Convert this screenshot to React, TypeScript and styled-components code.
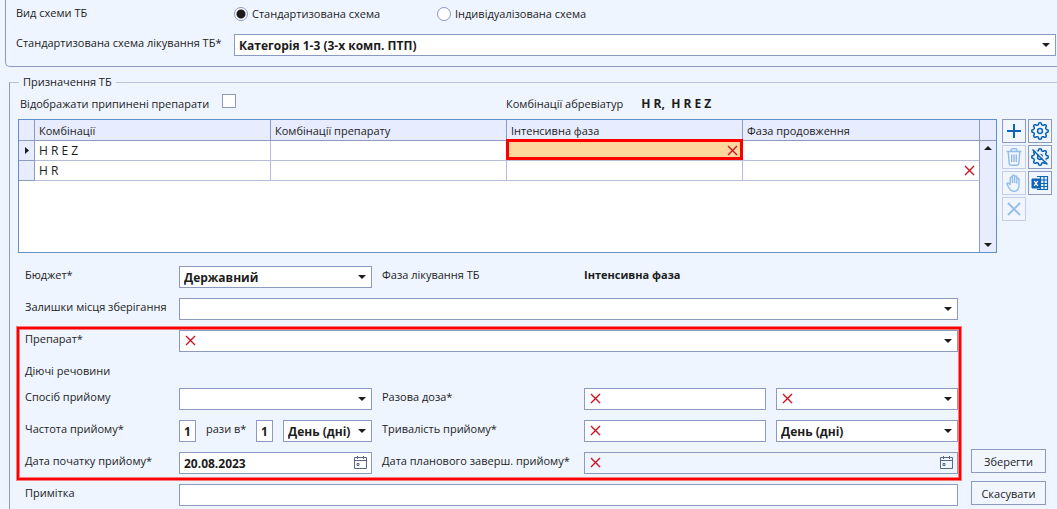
import React, { useState } from "react";
import styled, { createGlobalStyle, css } from "styled-components";

const color = {
  page: "#eef5ff",
  border: "#8c99c0",
  faint: "#b9c3dc",
  grid: "#5f92cc",
  head: "#e7edfe",
  line: "#b9bcd9",
  text: "#1c1c1c",
  blue: "#0a64bc",
  alert: "#ff0000",
  error: "#cf1020",
};

const size = {
  label: "11px",
  value: "12px",
};

const GlobalStyle = createGlobalStyle`
  *, *::before, *::after { box-sizing: border-box; }
  html { height: 100%; background: ${color.page}; overflow: hidden; }
  body { margin: 0; color: ${color.text}; }
  body, button, input, select, table {
    font-family: "Open Sans", "Noto Sans", sans-serif;
    font-size: ${size.label};
    line-height: 18px;
  }
`;

const SchemePanel = styled.section`
  display: flex;
  flex-direction: column;
  gap: 10px;
  margin-left: 5px;
  padding: 4px 1px 10px 10px;
  border: 1px solid ${color.border};
  border-width: 0 0 1px 1px;
  border-bottom-left-radius: 5px;
`;

const SchemeRow = styled.div<{ $tall?: boolean }>`
  display: grid;
  grid-template-columns: 218px minmax(0, 1fr);
  height: ${(p) => (p.$tall ? 22 : 20)}px;
`;

const RadioGroup = styled.div`
  display: flex;
  align-items: center;
  gap: 20px;
`;

const RadioLabel = styled.label`
  display: flex;
  align-items: center;
  gap: 4px;
  width: 183px;
  white-space: nowrap;
`;

const Radio = styled.input`
  appearance: none;
  flex: none;
  width: 14px;
  height: 14px;
  margin: 0;
  border: 1px solid ${color.border};
  border-radius: 50%;
  background: #fff;
  &:checked {
    background: radial-gradient(circle, #1c1c1c 4px, #fff 5px);
  }
`;

const Prescription = styled.fieldset`
  margin: 7px 0 0 9px;
  min-width: 0;
  padding: 0 5px 3px 8px;
  border: 1px solid ${color.border};
  border-top-color: ${color.faint};
  border-width: 1px 0 0 1px;
`;

const Legend = styled.legend`
  margin-left: 1px;
  padding: 0 4px;
  line-height: 16px;
`;

const FilterBar = styled.div`
  display: grid;
  grid-template-columns: 488px minmax(0, 1fr);
  align-items: center;
  height: 29px;
  padding-bottom: 2px;
`;

const CheckLabel = styled.label`
  display: flex;
  align-items: flex-start;
  gap: 13px;
  height: 20px;
  padding-left: 2px;
  line-height: 20px;
`;

const Checkbox = styled.input`
  appearance: none;
  width: 14px;
  height: 14px;
  margin: 0;
  border: 1px solid ${color.border};
  background: #fff;
  &:checked {
    background: ${color.blue};
  }
`;

const Abbreviations = styled.div`
  display: flex;
  gap: 18px;
`;

const Strong = styled.strong<{ $value?: boolean }>`
  font-size: ${(p) => (p.$value ? size.value : size.label)};
  font-weight: 700;
  white-space: pre;
`;

const GridArea = styled.div`
  display: flex;
  gap: 5px;
`;

const DataGrid = styled.div`
  display: flex;
  flex: 1;
  min-width: 0;
  height: 134px;
  border: 1px solid ${color.grid};
  background: #fff;
`;

const TableBox = styled.div`
  flex: 1;
  min-width: 0;
`;

const Table = styled.table`
  width: 100%;
  table-layout: fixed;
  border-collapse: separate;
  border-spacing: 0;
`;

const MarkerCol = styled.col`
  width: 16px;
`;

const HeadCell = styled.th`
  height: 21px;
  padding: 1px 4px 0;
  text-align: left;
  font-weight: 400;
  background: ${color.head};
  border-right: 1px solid ${color.border};
  border-bottom: 1px solid ${color.border};
  &:last-child {
    border-right: 0;
  }
`;

const MarkerCell = styled.td`
  height: 20px;
  padding: 0;
  background: ${color.head};
  border-right: 1px solid ${color.border};
  border-bottom: 1px solid ${color.border};
`;

const Cell = styled.td<{ $active?: boolean }>`
  position: relative;
  height: 20px;
  padding: 0 4px;
  font-size: ${size.value};
  border-right: 1px solid ${color.line};
  border-bottom: 1px solid ${color.line};
  &:last-child {
    border-right: 0;
  }
  ${(p) =>
    p.$active &&
    css`
      background: #fdd79c;
      &::after {
        content: "";
        position: absolute;
        inset: -2px -1px 0 -1px;
        border: 3px solid ${color.alert};
        pointer-events: none;
      }
    `}
`;

const CellMark = styled.span`
  display: flex;
  justify-content: flex-end;
`;

const ScrollBar = styled.div`
  display: flex;
  flex-direction: column;
  align-items: center;
  justify-content: space-between;
  width: 17px;
  padding-bottom: 5px;
  background: ${color.head};
  border-left: 1px solid ${color.border};
`;

const ScrollHead = styled.div`
  align-self: stretch;
  height: 21px;
  border-bottom: 1px solid ${color.border};
`;

const ScrollTrack = styled.div`
  display: flex;
  flex: 1;
  flex-direction: column;
  justify-content: space-between;
  padding-top: 5px;
`;

const ToolGrid = styled.div`
  display: grid;
  grid-template-columns: 24px 24px;
  grid-auto-rows: 24px;
  gap: 2px;
`;

const ToolButton = styled.button`
  display: flex;
  align-items: center;
  justify-content: center;
  padding: 0;
  color: ${color.blue};
  background: #f1f5fe;
  border: 1px solid ${color.border};
  &:disabled {
    color: #93bde8;
    border-color: #c4cde6;
  }
`;

const FormArea = styled.div`
  display: flex;
  gap: 13px;
  padding: 13px 6px 0 7px;
`;

const Form = styled.div`
  display: flex;
  flex: 1;
  flex-direction: column;
  gap: 10px;
  min-width: 0;
`;

const Highlight = styled.div`
  position: relative;
  display: flex;
  flex-direction: column;
  gap: 10px;
  &::after {
    content: "";
    position: absolute;
    inset: -3px -3px -6px -8px;
    border: 2px solid ${color.alert};
    box-shadow: 0 0 0 1px rgba(255, 0, 0, 0.5), inset 0 0 0 1px rgba(255, 0, 0, 0.5);
    pointer-events: none;
  }
`;

const FormRow = styled.div<{ $short?: boolean }>`
  display: grid;
  grid-template-columns: 154px minmax(0, 193fr) 212px minmax(0, 182fr) 10px minmax(0, 182fr);
  height: ${(p) => (p.$short ? 16 : 22)}px;
`;

const Label = styled.label<{ $inset?: boolean }>`
  padding-left: ${(p) => (p.$inset ? 10 : 0)}px;
  white-space: nowrap;
`;

const Field = styled.div<{ $span?: "all" | "right" | "last" }>`
  position: relative;
  display: flex;
  min-width: 0;
  height: 22px;
  ${(p) => p.$span === "all" && "grid-column: 2 / 7;"}
  ${(p) => p.$span === "right" && "grid-column: 4 / 7;"}
  ${(p) => p.$span === "last" && "grid-column: 6;"}
`;

const control = css`
  width: 100%;
  height: 22px;
  margin: 0;
  padding: 1px 4px 0;
  color: ${color.text};
  font-size: ${size.value};
  font-weight: 700;
  background: #fff;
  border: 1px solid ${color.border};
  border-radius: 0;
  outline: none;
`;

const SelectBox = styled.select`
  ${control}
  appearance: none;
`;

const TextBox = styled.input`
  ${control}
  &:read-only {
    background: ${color.page};
  }
`;

const FieldArrow = styled.span`
  position: absolute;
  top: 9px;
  right: 6px;
  display: flex;
  pointer-events: none;
`;

const FieldError = styled.span`
  position: absolute;
  top: 5px;
  left: 6px;
  display: flex;
  pointer-events: none;
`;

const DateButton = styled.button`
  position: absolute;
  top: 4px;
  right: 4px;
  display: flex;
  padding: 0;
  color: #5a6780;
  background: none;
  border: 0;
`;

const CountBox = styled(TextBox)`
  padding: 1px 0 0;
  text-align: center;
`;

const FrequencyRow = styled.div`
  display: grid;
  grid-template-columns: 17px 40px 17px minmax(0, 1fr);
  column-gap: 10px;
`;

const Actions = styled.div`
  display: flex;
  flex-direction: column;
  justify-content: flex-end;
  gap: 8px;
  width: 75px;
  padding-bottom: 1px;
`;

const ActionButton = styled.button`
  height: 24px;
  padding: 1px 0 0;
  color: ${color.text};
  background: #f1f5fe;
  border: 1px solid ${color.border};
`;

const ArrowIcon = ({ up }: { up?: boolean }) => (
  <svg width="8" height="4" viewBox="0 0 8 4" aria-hidden="true">
    <path d={up ? "M0 4 4 0l4 4z" : "M0 0h8L4 4z"} fill="#1c1c1c" />
  </svg>
);

const ErrorIcon = () => (
  <svg width="11" height="11" viewBox="0 0 11 11" aria-hidden="true">
    <path d="M1 1l9 9M10 1l-9 9" stroke={color.error} strokeWidth="1.4" fill="none" />
  </svg>
);

const MarkerIcon = () => (
  <svg width="15" height="9" viewBox="0 0 15 9" aria-hidden="true">
    <path d="M6 1l4 3.5-4 3.5z" fill="#1c1c1c" />
  </svg>
);

const CalendarIcon = () => (
  <svg width="14" height="14" viewBox="0 0 14 14" fill="none" stroke="currentColor" aria-hidden="true">
    <path d="M0.5 1.5h12v11h-12zM0.5 4.5h12M3.5 0v3M9.5 0v3" />
    <path d="M3 7.500h2v2h-2z" />
  </svg>
);

// Outline of a wheel with eight rounded teeth.
const gearPath = (() => {
  const points: string[] = [];
  for (let i = 0; i < 144; i += 1) {
    const angle = (i / 144) * Math.PI * 2;
    const wave = Math.cos(angle * 8);
    const r = 7.3 + 1 * Math.sign(wave) * Math.sqrt(Math.abs(wave));
    points.push(`${(9 + r * Math.cos(angle)).toFixed(2)} ${(9 + r * Math.sin(angle)).toFixed(2)}`);
  }
  return `M${points.join("L")}Z`;
})();

const GearIcon = ({ off }: { off?: boolean }) => (
  <svg width="18" height="18" viewBox="0 0 18 18" fill="none" stroke="currentColor" strokeWidth="1.5" strokeLinejoin="round" aria-hidden="true">
    <path d={gearPath} />
    <circle cx="9" cy="9" r="2.4" />
    {off && (
      <>
        <path d="M3 1l14 14" stroke="#f1f5fe" strokeWidth="1.6" />
        <path d="M1.5 1.5l15 15" />
      </>
    )}
  </svg>
);

const PlusIcon = () => (
  <svg width="14" height="14" viewBox="0 0 14 14" stroke="currentColor" strokeWidth="2" aria-hidden="true">
    <path d="M7 0v14M0 7h14" />
  </svg>
);

const TrashIcon = () => (
  <svg width="16" height="18" viewBox="0 0 16 18" fill="none" stroke="currentColor" strokeWidth="1.4" aria-hidden="true">
    <path d="M0.5 3.5h15M5 3.5v-1a1.7 1.7 0 0 1 1.7-1.7h2.6A1.7 1.7 0 0 1 11 2.5v1" />
    <path d="M2.2 3.5l1 12a1.8 1.8 0 0 0 1.8 1.7h6a1.8 1.8 0 0 0 1.8-1.7l1-12M5.7 6.5v7.5M8 6.5v7.5M10.3 6.5v7.5" />
  </svg>
);

const HandIcon = () => (
  <svg width="16" height="18" viewBox="0 0 16 18" fill="none" stroke="currentColor" strokeWidth="1.4" strokeLinejoin="round" strokeLinecap="round" aria-hidden="true">
    <path d="M4.2 10.5V4a1.1 1.1 0 0 1 2.2 0v4.5V2a1.1 1.1 0 0 1 2.2 0v6.5V3a1.1 1.1 0 0 1 2.2 0v6V5.2a1.1 1.1 0 0 1 2.2 0V11c0 4-2 6.3-5.2 6.3-2.4 0-3.7-1.2-4.8-3.3L1 10.2c-.4-1 .9-1.7 1.7-.8z" />
  </svg>
);

const CrossIcon = () => (
  <svg width="14" height="14" viewBox="0 0 14 14" stroke="currentColor" strokeWidth="1.8" aria-hidden="true">
    <path d="M1 1l12 12M13 1L1 13" />
  </svg>
);

const SheetIcon = () => (
  <svg width="18" height="16" viewBox="0 0 18 16" fill="none" stroke="currentColor" aria-hidden="true">
    <path d="M6 1.5h10.5v13H6M8 5h8.5M8 8.5h8.5M8 11.5h8.5M9.5 1.5v13M13 1.5v13" strokeWidth="1.2" />
    <path d="M1 4h8v9H1z" fill="currentColor" />
    <path d="M3.2 5.8l3.6 5M6.8 5.8l-3.6 5" stroke="#fff" strokeWidth="1.3" />
  </svg>
);

type SelectProps = {
  id: string;
  options?: string[];
  span?: "all" | "right" | "last";
  invalid?: boolean;
  label?: string;
};

const Select = ({ id, options = [""], span, invalid, label }: SelectProps) => (
  <Field $span={span}>
    <SelectBox id={id} aria-label={label} aria-invalid={invalid}>
      {options.map((option) => (
        <option key={option}>{option}</option>
      ))}
    </SelectBox>
    {invalid && (
      <FieldError>
        <ErrorIcon />
      </FieldError>
    )}
    <FieldArrow>
      <ArrowIcon />
    </FieldArrow>
  </Field>
);

type InputProps = {
  id: string;
  value?: string;
  span?: "all" | "right" | "last";
  invalid?: boolean;
  date?: boolean;
  readOnly?: boolean;
};

const Input = ({ id, value = "", span, invalid, date, readOnly }: InputProps) => (
  <Field $span={span}>
    <TextBox id={id} defaultValue={value} aria-invalid={invalid} readOnly={readOnly} />
    {invalid && (
      <FieldError>
        <ErrorIcon />
      </FieldError>
    )}
    {date && (
      <DateButton type="button" aria-label="Календар">
        <CalendarIcon />
      </DateButton>
    )}
  </Field>
);

const tools = [
  { label: "Додати", icon: <PlusIcon /> },
  { label: "Налаштування", icon: <GearIcon /> },
  { label: "Видалити", icon: <TrashIcon />, disabled: true },
  { label: "Скинути налаштування", icon: <GearIcon off /> },
  { label: "Припинити", icon: <HandIcon />, disabled: true },
  { label: "Експорт", icon: <SheetIcon /> },
  { label: "Відмінити", icon: <CrossIcon />, disabled: true },
];

export default function App() {
  const [scheme, setScheme] = useState("standard");

  return (
    <>
      <GlobalStyle />
      <SchemePanel>
        <SchemeRow>
          <span>Вид схеми ТБ</span>
          <RadioGroup>
            <RadioLabel>
              <Radio type="radio" name="scheme" checked={scheme === "standard"} onChange={() => setScheme("standard")} />
              Стандартизована схема
            </RadioLabel>
            <RadioLabel>
              <Radio type="radio" name="scheme" checked={scheme === "individual"} onChange={() => setScheme("individual")} />
              Індивідуалізована схема
            </RadioLabel>
          </RadioGroup>
        </SchemeRow>
        <SchemeRow $tall>
          <Label htmlFor="category">Стандартизована схема лікування ТБ*</Label>
          <Select id="category" options={["Категорія 1-3 (3-х комп. ПТП)"]} />
        </SchemeRow>
      </SchemePanel>

      <Prescription>
        <Legend>Призначення ТБ</Legend>
        <FilterBar>
          <CheckLabel>
            Відображати припинені препарати
            <Checkbox type="checkbox" />
          </CheckLabel>
          <Abbreviations>
            <span>Комбінації абревіатур</span>
            <Strong $value>{"H R,  H R E Z"}</Strong>
          </Abbreviations>
        </FilterBar>

        <GridArea>
          <DataGrid>
            <TableBox>
              <Table>
                <colgroup>
                  <MarkerCol />
                  <col />
                  <col />
                  <col />
                  <col />
                </colgroup>
                <thead>
                  <tr>
                    <HeadCell />
                    <HeadCell>Комбінації</HeadCell>
                    <HeadCell>Комбінації препарату</HeadCell>
                    <HeadCell>Інтенсивна фаза</HeadCell>
                    <HeadCell>Фаза продовження</HeadCell>
                  </tr>
                </thead>
                <tbody>
                  <tr>
                    <MarkerCell>
                      <MarkerIcon />
                    </MarkerCell>
                    <Cell>H R E Z</Cell>
                    <Cell />
                    <Cell $active>
                      <CellMark>
                        <ErrorIcon />
                      </CellMark>
                    </Cell>
                    <Cell />
                  </tr>
                  <tr>
                    <MarkerCell />
                    <Cell>H R</Cell>
                    <Cell />
                    <Cell />
                    <Cell>
                      <CellMark>
                        <ErrorIcon />
                      </CellMark>
                    </Cell>
                  </tr>
                </tbody>
              </Table>
            </TableBox>
            <ScrollBar>
              <ScrollHead />
              <ScrollTrack>
                <ArrowIcon up />
                <ArrowIcon />
              </ScrollTrack>
            </ScrollBar>
          </DataGrid>
          <ToolGrid>
            {tools.map((tool) => (
              <ToolButton key={tool.label} type="button" aria-label={tool.label} disabled={tool.disabled}>
                {tool.icon}
              </ToolButton>
            ))}
          </ToolGrid>
        </GridArea>

        <FormArea>
          <Form>
            <FormRow>
              <Label htmlFor="budget">Бюджет*</Label>
              <Select id="budget" options={["Державний"]} />
              <Label as="span" $inset>
                Фаза лікування ТБ
              </Label>
              <Strong>Інтенсивна фаза</Strong>
            </FormRow>
            <FormRow>
              <Label htmlFor="stock">Залишки місця зберігання</Label>
              <Select id="stock" span="all" />
            </FormRow>
            <Highlight>
              <FormRow>
                <Label htmlFor="drug">Препарат*</Label>
                <Select id="drug" span="all" invalid />
              </FormRow>
              <FormRow $short>
                <Label as="span">Діючі речовини</Label>
              </FormRow>
              <FormRow>
                <Label htmlFor="method">Спосіб прийому</Label>
                <Select id="method" />
                <Label htmlFor="dose" $inset>
                  Разова доза*
                </Label>
                <Input id="dose" invalid />
                <Select id="dose-unit" span="last" label="Одиниця дози" invalid />
              </FormRow>
              <FormRow>
                <Label htmlFor="times">Частота прийому*</Label>
                <FrequencyRow>
                  <CountBox id="times" defaultValue="1" />
                  <Label htmlFor="per">рази в*</Label>
                  <CountBox id="per" defaultValue="1" />
                  <Select id="period" options={["День (дні)"]} label="Період" />
                </FrequencyRow>
                <Label htmlFor="duration" $inset>
                  Тривалість прийому*
                </Label>
                <Input id="duration" invalid />
                <Select id="duration-unit" span="last" options={["День (дні)"]} label="Одиниця тривалості" />
              </FormRow>
              <FormRow>
                <Label htmlFor="start">Дата початку прийому*</Label>
                <Input id="start" value="20.08.2023" date />
                <Label htmlFor="finish" $inset>
                  Дата планового заверш. прийому*
                </Label>
                <Input id="finish" span="right" invalid date readOnly />
              </FormRow>
            </Highlight>
            <FormRow>
              <Label htmlFor="note">Примітка</Label>
              <Input id="note" span="all" />
            </FormRow>
          </Form>
          <Actions>
            <ActionButton type="button">Зберегти</ActionButton>
            <ActionButton type="button">Скасувати</ActionButton>
          </Actions>
        </FormArea>
      </Prescription>
    </>
  );
}
